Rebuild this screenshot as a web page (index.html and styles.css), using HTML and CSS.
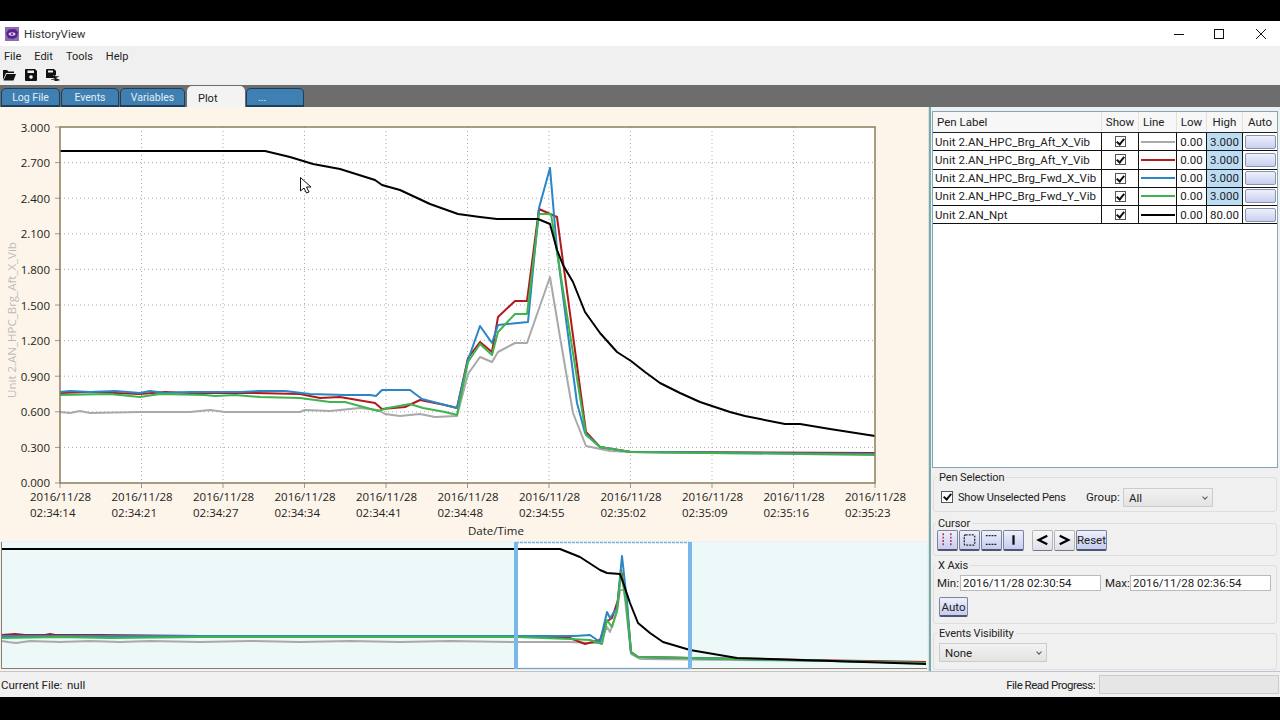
FILE: index.html
```html
<!DOCTYPE html>
<html>
<head>
	<title>HistoryView</title>
	<link rel="stylesheet" href="styles.css">
</head>
<body>
<div class="app">

	<div class="titlebar">
		<svg class="logo" viewBox="0 0 14 14" width="14" height="14">
			<rect width="14" height="14" fill="#8b6fa8"/>
			<path d="M1 6 4 2.500 10 2 13 5 12 10 8 12 3 11Z" fill="#5a1f8c"/>
			<ellipse cx="7" cy="7" rx="3.500" ry="1.800" fill="#d9c8ea"/>
			<circle cx="7" cy="7" r="1" fill="#4a1a78"/>
		</svg>
		<span class="app-name">HistoryView</span>
		<div class="win-buttons">
			<svg viewBox="0 0 10 10" width="10" height="10"><path d="M0 5.500H10" stroke="#111" fill="none"/></svg>
			<svg viewBox="0 0 10 10" width="10" height="10"><rect x=".5" y=".5" width="9" height="9" stroke="#111" fill="none"/></svg>
			<svg viewBox="0 0 10 10" width="10" height="10"><path d="M0 0 10 10M10 0 0 10" stroke="#111" fill="none"/></svg>
		</div>
	</div>

	<ul class="menu">
		<li>File</li>
		<li>Edit</li>
		<li>Tools</li>
		<li>Help</li>
	</ul>

	<div class="toolbar">
		<svg viewBox="0 0 14 12" width="14" height="12"><path d="M1 1H5L6.500 2.500H12V4H4L1 11ZM4.500 5H14L11.500 11.500H1.500Z" fill="#111"/></svg>
		<svg viewBox="0 0 12 12" width="12" height="12"><path d="M0 1Q0 0 1 0H10L12 2V11Q12 12 11 12H1Q0 12 0 11ZM2.500 1.500V4H9V1.500Z" fill="#111"/><circle cx="6" cy="8" r="1.800" fill="#fff"/></svg>
		<svg viewBox="0 0 14 12" width="14" height="12"><path d="M0 1Q0 0 1 0H8L10 2V6H7V9H0ZM2 1.500V3.500H7V1.500Z" fill="#111"/><path d="M5 10.500H9V9L13.500 11 9 12.500V11.500M13 7.500H9V6L5 8 9 9.500" fill="#111" stroke="#111" stroke-width=".5"/></svg>
	</div>

	<div class="tabs">
		<div class="tab tab-log">Log File</div>
		<div class="tab tab-events">Events</div>
		<div class="tab tab-vars">Variables</div>
		<div class="tab tab-plot">Plot</div>
		<div class="tab tab-more">...</div>
	</div>

	<div class="main">
		<div class="left">
			<svg class="plot" viewBox="0 107 928 433" width="928" height="433">
				<rect x="60" y="127" width="815" height="356" fill="#fff"/>
				<path class="grid" d="M60 162.600H875M60 198.200H875M60 233.800H875M60 269.400H875M60 305H875M60 340.600H875M60 376.200H875M60 411.800H875M60 447.400H875"/>
				<path class="grid" d="M141.500 127V483M223 127V483M304.500 127V483M386 127V483M467.500 127V483M549 127V483M630.500 127V483M712 127V483M793.500 127V483"/>
				<path class="ticks" d="M55 127H60M55 162.600H60M55 198.200H60M55 233.800H60M55 269.400H60M55 305H60M55 340.600H60M55 376.200H60M55 411.800H60M55 447.400H60M55 483H60"/>
				<path class="ticks" d="M60 483V488M141.500 483V488M223 483V488M304.500 483V488M386 483V488M467.500 483V488M549 483V488M630.500 483V488M712 483V488M793.500 483V488M875 483V488"/>

				<polyline class="pen gray" points="60,412 70,413 80,411 90,413 140,412 190,412 210,410 225,412 300,412 305,410 330,411 360,408 378,410 385,414 400,416 420,414 435,417 457,416 468,374 480,357 492,362 498,352 515,343 527,343 550,277 560,337 573,413 586,446 610,451 631,452 875,454"/>
				<polyline class="pen red" points="60,393 90,392 115,393 140,394 165,392 190,393 255,393 300,394 320,398 340,397 375,403 382,409 405,407 420,400 445,405 457,408 468,358 480,342 492,352 498,317 515,301 527,301 539,209 557,217 586,432 600,447 631,452 875,453"/>
				<polyline class="pen blue" points="60,392 70,391 90,392 115,391 140,393 150,391 165,393 190,392 240,392 260,391 285,391 310,394 345,395 370,395 376,396 382,390 410,390 422,399 445,405 457,408 468,360 480,326 492,343 498,325 528,322 539,208 550,168 557,250 567,327 577,403 585,433 600,447 631,452 875,454"/>
				<polyline class="pen green" points="60,395 110,394 140,397 160,394 205,395 215,396 235,395 260,397 300,398 330,402 345,402 378,411 388,408 410,404 423,408 445,412 457,415 468,362 480,344 492,355 498,332 515,314 527,314 539,214 551,214 586,435 600,447 631,452 875,455"/>
				<polyline class="pen black" points="60,151 265,151 290,157 313,164 340,169 375,180 382,185 400,190 430,204 458,214 480,217 497,219 538,219 550,224 557,250 563,265 573,282 585,312 600,333 617,352 631,361 645,372 660,383 680,393 700,402 730,412 745,416 785,424 800,424 830,429 875,436"/>

				<rect class="frame" x="60" y="127" width="815" height="356"/>

				<text class="tick" x="50" y="132">3.000</text>
				<text class="tick" x="50" y="167">2.700</text>
				<text class="tick" x="50" y="203">2.400</text>
				<text class="tick" x="50" y="238">2.100</text>
				<text class="tick" x="50" y="274">1.800</text>
				<text class="tick" x="50" y="310">1.500</text>
				<text class="tick" x="50" y="345">1.200</text>
				<text class="tick" x="50" y="381">0.900</text>
				<text class="tick" x="50" y="416">0.600</text>
				<text class="tick" x="50" y="452">0.300</text>
				<text class="tick" x="50" y="487">0.000</text>

				<text class="date" x="30" y="501">2016/11/28<tspan x="30" dy="16">02:34:14</tspan></text>
				<text class="date" x="111.500" y="501">2016/11/28<tspan x="111.500" dy="16">02:34:21</tspan></text>
				<text class="date" x="193" y="501">2016/11/28<tspan x="193" dy="16">02:34:27</tspan></text>
				<text class="date" x="274.500" y="501">2016/11/28<tspan x="274.500" dy="16">02:34:34</tspan></text>
				<text class="date" x="356" y="501">2016/11/28<tspan x="356" dy="16">02:34:41</tspan></text>
				<text class="date" x="437.500" y="501">2016/11/28<tspan x="437.500" dy="16">02:34:48</tspan></text>
				<text class="date" x="519" y="501">2016/11/28<tspan x="519" dy="16">02:34:55</tspan></text>
				<text class="date" x="600.500" y="501">2016/11/28<tspan x="600.500" dy="16">02:35:02</tspan></text>
				<text class="date" x="682" y="501">2016/11/28<tspan x="682" dy="16">02:35:09</tspan></text>
				<text class="date" x="763.500" y="501">2016/11/28<tspan x="763.500" dy="16">02:35:16</tspan></text>
				<text class="date" x="845" y="501">2016/11/28<tspan x="845" dy="16">02:35:23</tspan></text>

				<text class="date" x="468" y="535">Date/Time</text>
				<text class="y-title" transform="translate(16 320) rotate(-90)" text-anchor="middle">Unit 2.AN_HPC_Brg_Aft_X_Vib</text>

				<!-- mouse pointer -->
				<path d="M300.500 177.500V191L304 188 306.500 193 309 192 306.500 187H311Z" fill="#fff" stroke="#111"/>
			</svg>

			<svg class="mini" viewBox="0 541 928 129" width="928" height="129">
				<rect x="1" y="542" width="926" height="127" fill="#edf8f9"/>
				<rect x="516" y="543" width="174" height="125" fill="#fff"/>
				<polyline class="mini-pen gray" points="2,641 8,642 16,643 30,641 60,642 90,641 120,642 150,641 200,642 250,641 300,642 350,641 400,642 450,641 516,642 570,642 590,643 600,643 607,627 610,632 617,612 620,590 624,590 631,654 640,659 926,662"/>
				<polyline class="mini-pen red" points="2,635 15,634 25,635 45,635 50,634 55,635 100,635 200,636 400,636 516,636 570,638 585,644 600,640 606,622 612,618 618,600 621,570 626,595 631,652 638,657 926,662"/>
				<polyline class="mini-pen blue" points="2,636 200,636 516,636 575,636 590,635 600,642 607,612 610,618 617,608 622,556 627,602 631,652 638,657 926,663"/>
				<polyline class="mini-pen green" points="2,638 60,637 110,638 200,637 516,637 570,639 590,640 602,644 607,620 612,627 617,610 621,572 626,602 631,652 638,657 926,663"/>
				<polyline class="mini-pen black" points="2,549 560,549 580,557 600,570 607,573 620,574 624,585 630,603 638,623 650,633 663,642 690,650 737,658 926,664"/>
				<path class="mini-frame" d="M1.500 542V668.500H927"/>
				<path class="mini-top" d="M516 542.500H690M516 668.500H690"/>
				<path class="mini-sel" d="M516 542V669M690 542V669"/>
			</svg>
		</div>

		<div class="splitter"></div>

		<div class="right">
			<div class="pens">
				<div class="pen-row pen-head">
					<div class="cell">Pen Label</div>
					<div class="cell center">Show</div>
					<div class="cell">Line</div>
					<div class="cell center">Low</div>
					<div class="cell center">High</div>
					<div class="cell center">Auto</div>
				</div>
				<div class="pen-row">
					<div class="cell label">Unit 2.AN_HPC_Brg_Aft_X_Vib</div>
					<div class="cell center"><span class="check"></span></div>
					<div class="cell"><span class="swatch sw-gray"></span></div>
					<div class="cell center">0.00</div>
					<div class="cell center high">3.000</div>
					<div class="cell center"><span class="auto-btn"></span></div>
				</div>
				<div class="pen-row">
					<div class="cell label">Unit 2.AN_HPC_Brg_Aft_Y_Vib</div>
					<div class="cell center"><span class="check"></span></div>
					<div class="cell"><span class="swatch sw-red"></span></div>
					<div class="cell center">0.00</div>
					<div class="cell center high">3.000</div>
					<div class="cell center"><span class="auto-btn"></span></div>
				</div>
				<div class="pen-row">
					<div class="cell label">Unit 2.AN_HPC_Brg_Fwd_X_Vib</div>
					<div class="cell center"><span class="check"></span></div>
					<div class="cell"><span class="swatch sw-blue"></span></div>
					<div class="cell center">0.00</div>
					<div class="cell center high">3.000</div>
					<div class="cell center"><span class="auto-btn"></span></div>
				</div>
				<div class="pen-row">
					<div class="cell label">Unit 2.AN_HPC_Brg_Fwd_Y_Vib</div>
					<div class="cell center"><span class="check"></span></div>
					<div class="cell"><span class="swatch sw-green"></span></div>
					<div class="cell center">0.00</div>
					<div class="cell center high">3.000</div>
					<div class="cell center"><span class="auto-btn"></span></div>
				</div>
				<div class="pen-row">
					<div class="cell label">Unit 2.AN_Npt</div>
					<div class="cell center"><span class="check"></span></div>
					<div class="cell"><span class="swatch sw-black"></span></div>
					<div class="cell center">0.00</div>
					<div class="cell center">80.00</div>
					<div class="cell center"><span class="auto-btn"></span></div>
				</div>
			</div>

			<fieldset class="group group-pens">
				<legend>Pen Selection</legend>
				<span class="check check-big"></span>
				<span class="show-label">Show Unselected Pens</span>
				<span class="group-label">Group:</span>
				<div class="combo combo-group">All</div>
			</fieldset>

			<fieldset class="group group-cursor">
				<legend>Cursor</legend>
				<div class="btn cur">
					<svg viewBox="0 0 20 20" width="20" height="20"><path d="M5.500 3V17M13.500 3V17" stroke="#c0304a" stroke-width="1.600" stroke-dasharray="2 1.500" fill="none"/></svg>
				</div>
				<div class="btn cur">
					<svg viewBox="0 0 20 20" width="20" height="20"><rect x="4.500" y="4.500" width="11" height="11" rx="1.500" stroke="#222" stroke-width="1.300" stroke-dasharray="2 1.200" fill="none"/></svg>
				</div>
				<div class="btn cur">
					<svg viewBox="0 0 20 20" width="20" height="20"><path d="M4 5.500H16M4 14.500H16" stroke="#222" stroke-width="1.300" stroke-dasharray="2 1" fill="none"/></svg>
				</div>
				<div class="btn cur">
					<svg viewBox="0 0 20 20" width="20" height="20"><path d="M10 5V15" stroke="#111" stroke-width="2.400" fill="none"/></svg>
				</div>
				<div class="btn plain step">
					<svg viewBox="0 0 20 20" width="20" height="20"><path d="M15 5.500 6 10 15 14.500" stroke="#000" stroke-width="2.400" fill="none"/></svg>
				</div>
				<div class="btn plain">
					<svg viewBox="0 0 20 20" width="20" height="20"><path d="M5 5.500 14 10 5 14.500" stroke="#000" stroke-width="2.400" fill="none"/></svg>
				</div>
				<div class="btn cur reset">Reset</div>
			</fieldset>

			<fieldset class="group group-axis">
				<legend>X Axis</legend>
				<div class="axis-row">
					<span class="axis-label">Min:</span>
					<div class="input">2016/11/28 02:30:54</div>
					<span class="axis-label max">Max:</span>
					<div class="input">2016/11/28 02:36:54</div>
				</div>
				<div class="btn cur auto">Auto</div>
			</fieldset>

			<fieldset class="group group-events">
				<legend>Events Visibility</legend>
				<div class="combo combo-events">None</div>
			</fieldset>
		</div>
	</div>

	<div class="status">
		<span class="current">Current File:</span>
		<span>null</span>
		<span class="progress-label">File Read Progress:</span>
		<div class="progress"></div>
	</div>

</div>
</body>
</html>
```

FILE: styles.css
```css
html, body {
	margin: 0;
	padding: 0;
	background: #000;
}

.app {
	width: 1280px;
	height: 720px;
	padding: 21px 0 23px;
	box-sizing: border-box;
	display: flex;
	flex-direction: column;
	font-family: Roboto, "Open Sans", sans-serif;
	font-size: 11.500px;
	color: #222;
	overflow: hidden;
}

.titlebar {
	height: 25px;
	background: #fff;
	display: flex;
	align-items: center;
	padding-left: 5px;
}
.app-name {
	margin-left: 5px;
	color: #333;
}
.win-buttons {
	margin-left: auto;
	display: flex;
	padding-right: 14px;
	gap: 32px;
}
.win-buttons svg:first-child {
	margin-right: -2px;
}

.menu {
	list-style: none;
	margin: 0;
	height: 19px;
	box-sizing: border-box;
	padding: 1px 0 0 4px;
	background: #f0f0f0;
	display: flex;
	align-items: center;
	gap: 13px;
	font-size: 11px;
}

.toolbar {
	height: 20px;
	background: #f0f0f0;
	display: flex;
	align-items: center;
	gap: 9px;
	padding-left: 2px;
}

.tabs {
	height: 22px;
	background: #6d6d6d;
	display: flex;
	align-items: flex-end;
	padding-left: 1px;
	gap: 1px;
	font-size: 10.500px;
}
.tab {
	height: 19px;
	box-sizing: border-box;
	background: #3f7fb1;
	color: #e4eef6;
	border: 1px solid #1c3f5e;
	border-bottom-width: 2px;
	border-radius: 5px 5px 0 0;
	text-align: center;
	line-height: 18px;
}
.tab-log { width: 59px; }
.tab-events { width: 58px; }
.tab-vars { width: 65px; }
.tab-plot {
	width: 58px;
	height: 21px;
	margin-left: 1px;
	padding-left: 11px;
	background: #f3f3f3;
	color: #222;
	border: 0;
	line-height: 25px;
	text-align: left;
	font-size: 11px;
}
.tab-more {
	width: 58px;
	padding-left: 11px;
	text-align: left;
}

.main {
	height: 564px;
	display: flex;
	background: #f0f0f0;
}

.left {
	width: 928px;
	display: flex;
	flex-direction: column;
	background: #fdf5e9;
}
.plot, .mini {
	display: block;
	font-family: "Open Sans", sans-serif;
}
.mini {
	margin-top: 1px;
	background: #f0f0f0;
}

.grid {
	stroke: #aaa;
	stroke-width: 1;
	stroke-dasharray: 1 3;
	fill: none;
}
.ticks {
	stroke: #999;
	fill: none;
}
.frame {
	fill: none;
	stroke: #8c7d5a;
	stroke-width: 1.500;
}
.pen {
	fill: none;
	stroke-width: 2;
	stroke-linejoin: round;
}
.mini-pen {
	fill: none;
	stroke-width: 2;
	stroke-linejoin: round;
}
.gray { stroke: #a9a9a9; }
.red { stroke: #b3181c; }
.blue { stroke: #2a86c4; }
.green { stroke: #3fb44c; }
.black { stroke: #000; }

.tick {
	font-size: 11.500px;
	fill: #222;
	text-anchor: end;
}
.date {
	font-size: 11.500px;
	fill: #222;
}
.y-title {
	font-size: 11.500px;
	fill: #bbb;
}

.mini-frame {
	fill: none;
	stroke: #8c7d6a;
}
.mini-top {
	fill: none;
	stroke: #7ab4e4;
	stroke-width: 1.500;
	stroke-dasharray: 3 1;
}
.mini-sel {
	fill: none;
	stroke: #7ab8ec;
	stroke-width: 4;
}

.splitter {
	width: 3px;
	background: #7fa9a8;
	margin-right: 1px;
	border-left: 1px solid #d8e4e4;
	box-sizing: border-box;
}

.right {
	flex: 1;
	padding-top: 4px;
	min-width: 0;
}

.pens {
	height: 357px;
	width: 346px;
	box-sizing: border-box;
	background: #fff;
	border: 1px solid #7fa9b8;
}
.pen-row {
	display: grid;
	grid-template-columns: 169px 37px 38px 30px 36px 34px;
	height: 17.250px;
	border-bottom: 1px solid #111;
	box-sizing: content-box;
}
.pen-head {
	height: 20px;
	background: #f7f7f7;
	border-bottom: 1px solid #222;
}
.pen-head .cell {
	border-right: 1px solid #e2e2e2;
	padding-left: 4px;
}
.pen-head .cell.center {
	padding-left: 0;
}
.cell {
	display: flex;
	align-items: center;
	border-right: 1px solid #111;
	box-sizing: border-box;
	white-space: nowrap;
	overflow: hidden;
}
.cell:last-child {
	border-right: 0;
}
.center {
	justify-content: center;
}
.label {
	padding-left: 2px;
	letter-spacing: .05px;
}
.high {
	background: #bcdcf4;
}
.swatch {
	display: block;
	width: 34px;
	height: 2px;
	margin-left: 2px;
}
.sw-gray { background: #aaa; }
.sw-red { background: #b3181c; }
.sw-blue { background: #2a86c4; }
.sw-green { background: #3fb44c; }
.sw-black { background: #000; }

.check {
	display: block;
	position: relative;
	width: 11px;
	height: 11px;
	box-sizing: border-box;
	border: 1px solid #555;
	background: #fff;
}
.check::after {
	content: "";
	position: absolute;
	left: 2.500px;
	top: 0;
	width: 3px;
	height: 6px;
	border: solid #111;
	border-width: 0 2px 2px 0;
	transform: rotate(40deg);
}
.check-big {
	width: 12px;
	height: 12px;
}
.auto-btn {
	display: block;
	width: 31px;
	height: 14px;
	box-sizing: border-box;
	border: 1px solid #8a94ad;
	border-radius: 2px;
	background: linear-gradient(#eef0fb, #c9cff0);
}

.group {
	margin: 0 3px 0 1px;
	padding: 0 4px;
	width: 344px;
	box-sizing: border-box;
	border: 1px solid #dedede;
	border-radius: 3px;
	display: flex;
	align-items: center;
}
.group legend {
	margin-left: -1px;
	padding: 1px 2px 0;
	line-height: 12px;
	font-size: 11px;
	letter-spacing: -.1px;
	color: #222;
}
.group-pens {
	display: block;
	height: 41px;
	margin-top: 3px;
}
.group-pens .check, .group-pens .show-label, .group-pens .group-label {
	float: left;
}
.group-pens .check {
	margin: 7px 0 0 3px;
}
.show-label {
	width: 123px;
	margin: 7px 0 0 5px;
	font-size: 11px;
	letter-spacing: -.2px;
}
.group-label {
	width: 37px;
	margin: 6px 0 0 5px;
}
.combo {
	float: left;
	height: 19px;
	line-height: 18px;
	box-sizing: border-box;
	padding-left: 5px;
	border: 1px solid #ccc;
	background: linear-gradient(#f2f2f2, #e3e3e3);
	position: relative;
}
.combo::after {
	content: "";
	position: absolute;
	right: 5px;
	top: 6px;
	width: 3px;
	height: 3px;
	border: solid #555;
	border-width: 0 1px 1px 0;
	transform: rotate(45deg);
}
.combo-group {
	width: 90px;
	margin: 4px 0 0 0;
}
.group-cursor {
	display: flex;
	height: 39px;
	margin-top: 5px;
	gap: 1px;
	padding-left: 3px;
	padding-bottom: 5px;
}
.btn {
	width: 21px;
	height: 21px;
	box-sizing: border-box;
	display: flex;
	align-items: center;
	justify-content: center;
	border-radius: 2px;
}
.cur {
	border: 1px solid #7b849c;
	border-bottom: 2px solid #4d5670;
	background: linear-gradient(#eef0fb, #c6ccf0);
}
.plain {
	border: 1px solid #b5b5b5;
	border-bottom-color: #777;
	background: linear-gradient(#f8f8f8, #dfe0ea);
}
.step {
	margin-left: 7px;
}
.reset {
	width: 31px;
}
.group-axis {
	display: block;
	height: 65px;
	margin-top: 3px;
	padding: 0 4px 0 3px;
}
.axis-row {
	display: flex;
	align-items: center;
	height: 17px;
	margin-top: 2px;
}
.axis-label {
	width: 23px;
}
.axis-label.max {
	width: 25px;
	margin-left: 4px;
}
.input {
	width: 141px;
	height: 16px;
	line-height: 14px;
	box-sizing: border-box;
	padding-left: 2px;
	background: #fff;
	border: 1px solid #bbb;
}
.auto {
	width: 29px;
	height: 20px;
	margin: 6px 0 0 2px;
}
.group-events {
	display: block;
	height: 43px;
	margin-top: 3px;
}
.combo-events {
	width: 108px;
	margin: 3px 0 0 1px;
}

.status {
	height: 26px;
	box-sizing: border-box;
	border-top: 1px solid #b9c5d2;
	background: #f0f0f0;
	display: flex;
	align-items: center;
	padding-left: 1px;
}
.current {
	width: 66px;
}
.progress-label {
	margin-left: auto;
	margin-right: 4px;
	letter-spacing: -.5px;
}
.progress {
	width: 180px;
	height: 19px;
	margin-right: 1px;
	box-sizing: border-box;
	border: 1px solid #ccc;
	background: #e6e6e6;
}
```
